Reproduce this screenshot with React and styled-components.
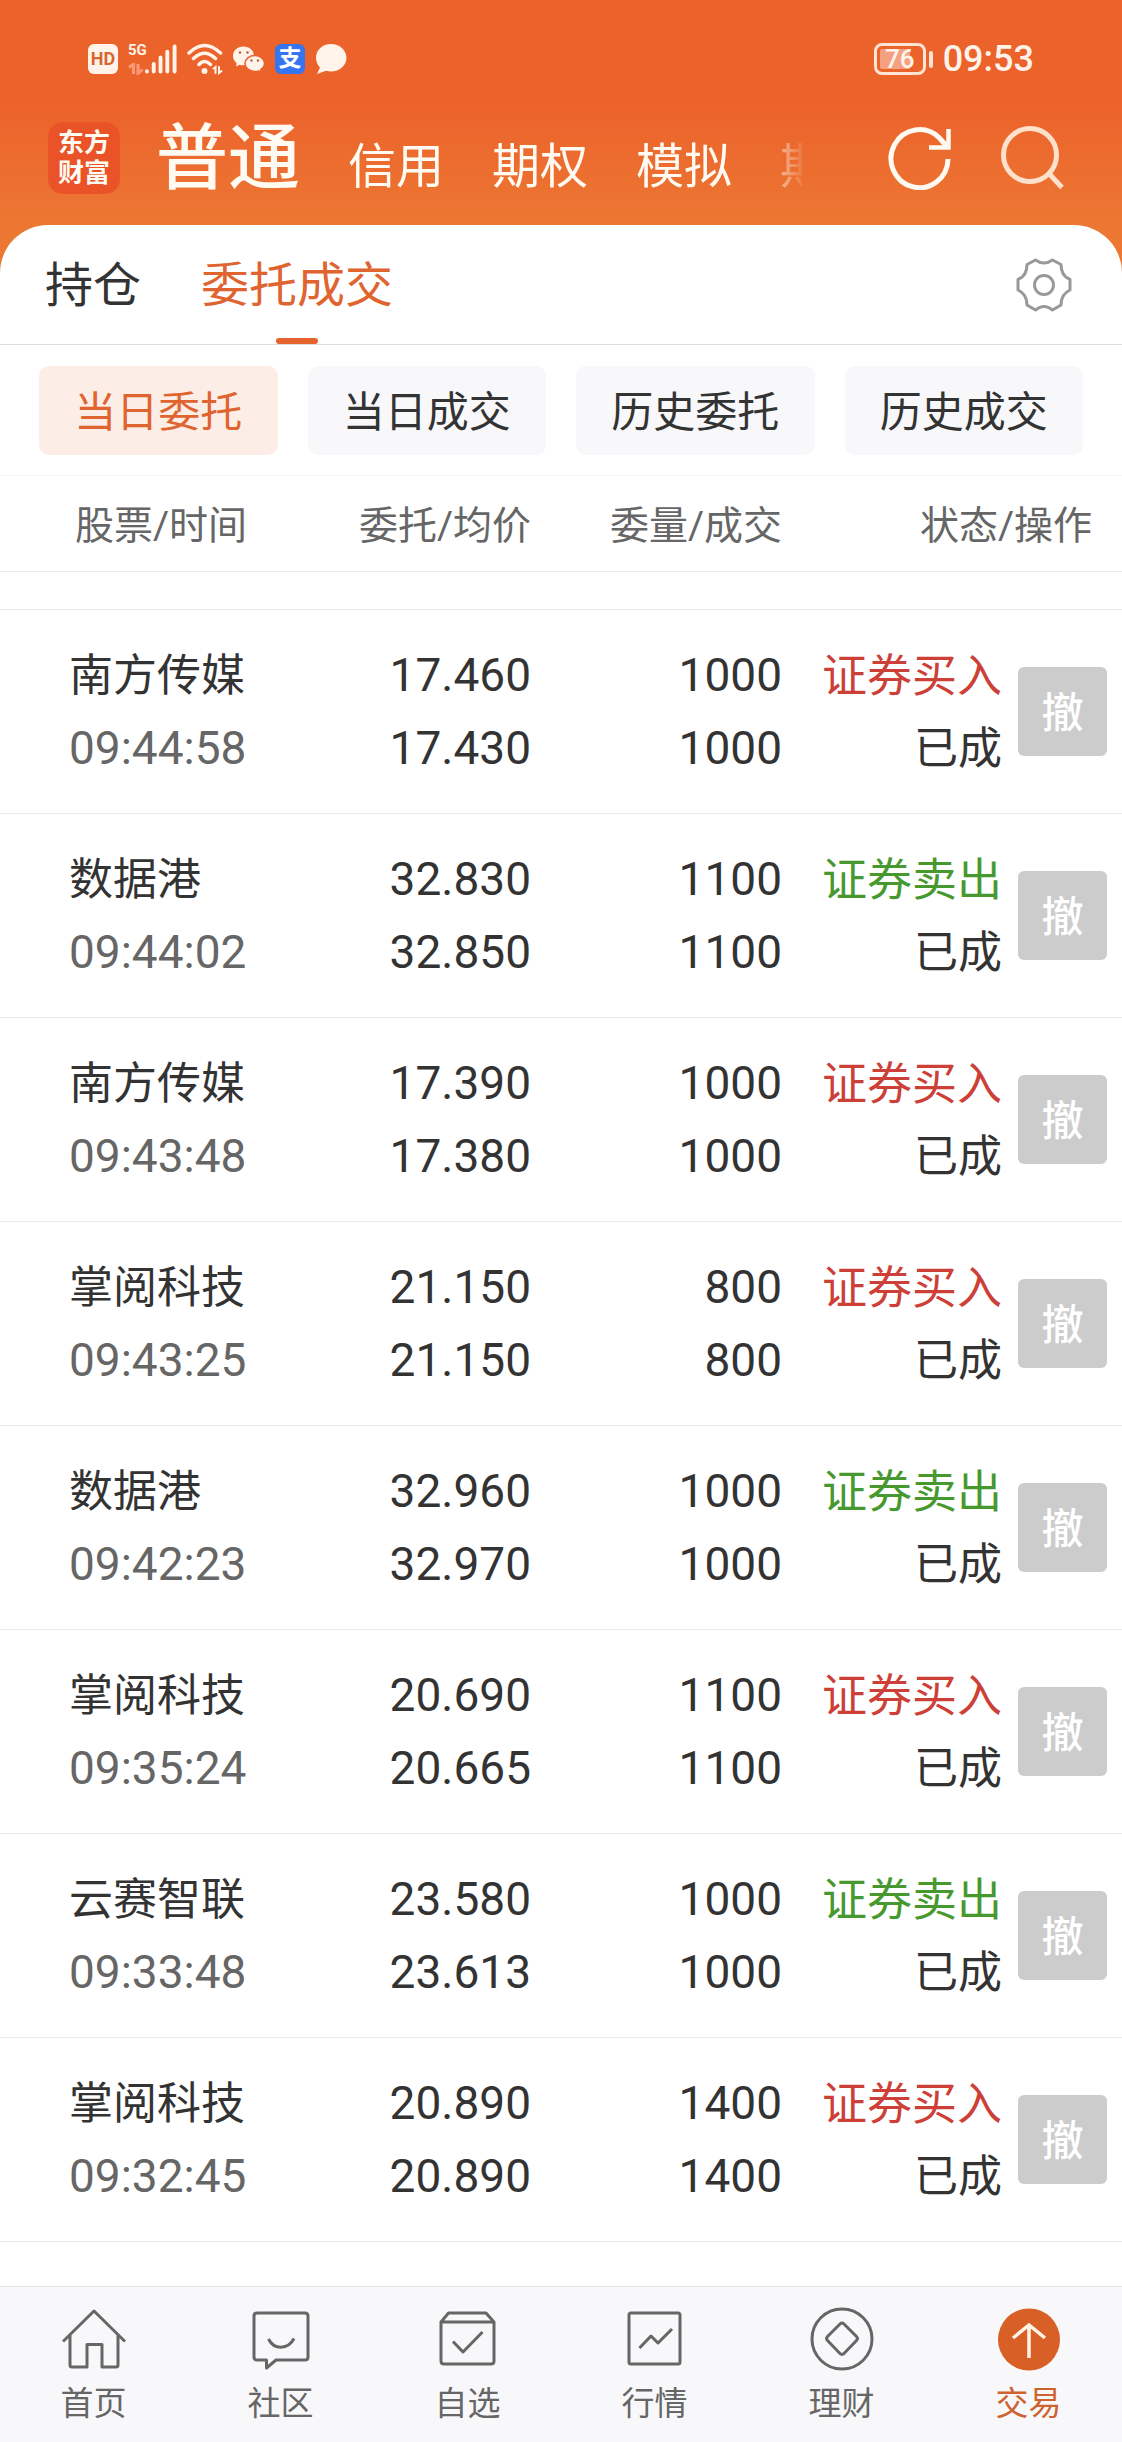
import React from 'react';
import styled, { createGlobalStyle } from 'styled-components';

const GlobalStyle = createGlobalStyle`
  * {
    box-sizing: border-box;
  }
  body {
    margin: 0;
    font-family: Roboto, "Noto Sans CJK SC", sans-serif;
    color: #333;
    background: #fff;
  }
  button {
    border: 0;
    padding: 0;
    margin: 0;
    background: none;
    font-family: inherit;
    color: inherit;
    cursor: pointer;
  }
  a {
    color: inherit;
    text-decoration: none;
  }
  svg {
    display: block;
    flex: none;
  }
`;

const Page = styled.div`
  min-height: 100vh;
  display: flex;
  flex-direction: column;
  background: linear-gradient(#ec622b 100px, #ec7733 225px);
`;

/*** status bar ***/
const StatusBar = styled.div`
  height: 118px;
  padding: 0 88px;
  display: flex;
  align-items: center;
  justify-content: space-between;
  color: #fff3ea;
`;

const StatusGroup = styled.div`
  display: flex;
  align-items: center;
  gap: 10px;
`;

const Badge = styled.span`
  width: 30px;
  height: 30px;
  border-radius: 6px;
  display: flex;
  align-items: center;
  justify-content: center;
  font-size: ${props => props.$size};
  font-weight: 700;
  line-height: 30px;
  color: ${props => props.$color};
  background: ${props => props.$bg};
`;

const Signal = styled.span`
  display: flex;
`;

const Network = styled.span`
  display: flex;
  flex-direction: column;
  justify-content: space-between;
  width: 17px;
  height: 32px;
  font-size: 15px;
  font-weight: 700;
  line-height: 15px;
`;

const PowerGroup = styled.div`
  display: flex;
  align-items: center;
`;

const Battery = styled.span`
  width: 52px;
  height: 32px;
  padding: 3px;
  border: 3px solid #ffe3d3;
  border-radius: 8px;
  background: linear-gradient(to right, #f5a181 76%, transparent 76%) content-box;
  font-size: 26px;
  font-weight: 500;
  line-height: 21px;
  text-align: center;
`;

const BatteryTip = styled.span`
  width: 4px;
  height: 17px;
  margin: 0 10px 0 3px;
  border-radius: 2px;
  background: #ffe3d3;
`;

const Clock = styled.span`
  font-size: 36px;
  font-weight: 500;
`;

/*** header ***/
const Header = styled.header`
  display: flex;
  align-items: center;
  padding: 0 58px 27px 48px;
  color: #fffaf2;
`;

const Logo = styled.div`
  width: 72px;
  height: 72px;
  flex: none;
  display: flex;
  align-items: center;
  justify-content: center;
  border-radius: 15px;
  background: #ea5228;
  font-size: 26px;
  font-weight: 700;
  line-height: 30px;
  text-align: center;
`;

const AccountTabs = styled.nav`
  flex: 1;
  min-width: 0;
  height: 80px;
  margin: 0 86px 0 36px;
  padding-top: 5px;
  display: flex;
  align-items: baseline;
  gap: 48px;
  overflow: hidden;
  mask-image: linear-gradient(to right, #000 calc(100% - 48px), rgba(0, 0, 0, 0.1));
`;

const AccountTab = styled.button`
  flex: none;
  font-size: ${props => (props.$active ? '72px' : '48px')};
  font-weight: ${props => (props.$active ? 500 : 400)};
  line-height: 72px;
`;

const HeaderActions = styled.div`
  display: flex;
  gap: 48px;
`;

/*** panel ***/
const Panel = styled.main`
  flex: 1;
  background: #fff;
  border-radius: 48px 48px 0 0;
`;

const TabBar = styled.div`
  height: 120px;
  padding: 0 50px 0 45px;
  display: flex;
  align-items: center;
  justify-content: space-between;
  border-bottom: 1px solid #ddd;
`;

const Tabs = styled.div`
  display: flex;
  gap: 60px;
  height: 119px;
`;

const Tab = styled.button`
  display: flex;
  flex-direction: column;
  align-items: center;
  justify-content: space-between;
  padding-top: 9px;
  font-size: 48px;
  line-height: 104px;
  color: ${props => (props.$active ? '#e0642f' : '#333')};
  &::after {
    content: '';
    width: 42px;
    height: 6px;
    border-radius: 3px;
    background: ${props => (props.$active ? '#e5642e' : 'transparent')};
  }
`;

const Filters = styled.div`
  display: flex;
  gap: 30px;
  padding: 21px 39px 20px;
  border-bottom: 1px solid #f5f5f5;
`;

const Filter = styled.button`
  flex: 1;
  height: 89px;
  padding-bottom: 4px;
  border-radius: 10px;
  font-size: 42px;
  color: ${props => (props.$active ? '#e0642f' : '#333')};
  background: ${props => (props.$active ? '#fcede6' : '#f8f8fa')};
`;

/*** orders ***/
const Orders = styled.table`
  width: 100%;
  table-layout: fixed;
  border-collapse: separate;
  border-spacing: 0;
`;

const Col = styled.col`
  width: ${props => props.$width};
`;

const HeadCell = styled.th`
  height: 96px;
  padding: ${props => props.$padding || '0 0 4px'};
  border-bottom: 1px solid #ebebeb;
  font-size: 39px;
  font-weight: 400;
  color: #666;
  text-align: ${props => props.$align || 'right'};
`;

const GapCell = styled.td`
  height: 38px;
  padding: 0;
  border-bottom: 1px solid #ebebeb;
`;

const Cell = styled.td`
  height: 204px;
  padding: ${props => props.$padding || '0'};
  border-bottom: 1px solid #ebebeb;
  text-align: ${props => props.$align || 'right'};
`;

const Line = styled.div`
  height: 73px;
  font-size: 46px;
  line-height: 73px;
  color: ${props => props.$color || '#333'};
`;

const TextLine = styled(Line)`
  font-size: ${props => props.$size || '44px'};
  line-height: 75px;
`;

const CancelButton = styled.button`
  display: block;
  width: 89px;
  height: 89px;
  margin-left: auto;
  padding-bottom: 4px;
  border-radius: 6px;
  background: #ccc;
  color: #fff;
  font-size: 42px;
  font-weight: 500;
`;

/*** bottom bar ***/
const BottomBar = styled.nav`
  display: flex;
  padding: 20px 0 14px;
  border-top: 1px solid #e2e2e2;
  background: #f8f8fa;
`;

const BottomLink = styled.a`
  flex: 1;
  display: flex;
  flex-direction: column;
  align-items: center;
  gap: 8px;
  font-size: 33px;
  line-height: 49px;
  color: ${props => (props.$active ? '#cf6330' : '#666')};
`;

const NavSvg = ({ children }) => (
  <svg width="64" height="64" viewBox="0 0 64 64" fill="none" stroke="#666" strokeWidth="3" strokeLinejoin="round">
    {children}
  </svg>
);

const navItems = [
  {
    label: '首页',
    icon: (
      <NavSvg>
        <path d="M1 34.500 32 4l31 30.500M8 28v30q0 2 2 2h15V37.500h15V60h14q2 0 2-2V28" />
      </NavSvg>
    ),
  },
  {
    label: '社区',
    icon: (
      <NavSvg>
        <path d="M8 6h48q3 0 3 3v41q0 3-3 3H27l-9.500 8V53H8q-3 0-3-3V9q0-3 3-3z" />
        <path d="M19.500 32C25 43 39 43 45 31.500" />
      </NavSvg>
    ),
  },
  {
    label: '自选',
    icon: (
      <NavSvg>
        <path d="M5 15 12.500 6H50l8 9v39q0 3-3 3H8q-3 0-3-3zh53" />
        <path d="m17 34.500 10 10.500 19.500-20" />
      </NavSvg>
    ),
  },
  {
    label: '行情',
    icon: (
      <NavSvg>
        <rect x="6" y="6" width="51" height="51" rx="2" />
        <path d="m16.500 41 11.500-12 7 7 14-14" />
      </NavSvg>
    ),
  },
  {
    label: '理财',
    icon: (
      <NavSvg>
        <circle cx="32" cy="32" r="30" />
        <path d="m34 17 12.500 12.500q2 2 0 4L34 46.500q-2 2-4 0L17.500 33.500q-2-2 0-4L30 17q2-2 4 0z" />
      </NavSvg>
    ),
  },
  {
    label: '交易',
    active: true,
    icon: (
      <svg width="64" height="64" viewBox="0 0 64 64" fill="none">
        <circle cx="32" cy="32.500" r="31" fill="#d86027" />
        <path d="M32 51V18M16 31 32 18l16 13" stroke="#fff3e6" strokeWidth="3.500" />
      </svg>
    ),
  },
];

const orders = [
  { name: '南方传媒', time: '09:44:58', price: '17.460', avg: '17.430', amount: '1000', filled: '1000', side: 'buy' },
  { name: '数据港', time: '09:44:02', price: '32.830', avg: '32.850', amount: '1100', filled: '1100', side: 'sell' },
  { name: '南方传媒', time: '09:43:48', price: '17.390', avg: '17.380', amount: '1000', filled: '1000', side: 'buy' },
  { name: '掌阅科技', time: '09:43:25', price: '21.150', avg: '21.150', amount: '800', filled: '800', side: 'buy' },
  { name: '数据港', time: '09:42:23', price: '32.960', avg: '32.970', amount: '1000', filled: '1000', side: 'sell' },
  { name: '掌阅科技', time: '09:35:24', price: '20.690', avg: '20.665', amount: '1100', filled: '1100', side: 'buy' },
  { name: '云赛智联', time: '09:33:48', price: '23.580', avg: '23.613', amount: '1000', filled: '1000', side: 'sell' },
  { name: '掌阅科技', time: '09:32:45', price: '20.890', avg: '20.890', amount: '1400', filled: '1400', side: 'buy' },
];

const sides = {
  buy: { text: '证券买入', color: '#cc4038' },
  sell: { text: '证券卖出', color: '#47992f' },
};

const StatusIcons = () => (
  <StatusGroup>
    <Badge $size="18px" $color="#d9652f" $bg="#fff3ea">HD</Badge>
    <Signal>
      <Network>
        5G
        <svg width="16" height="12" viewBox="0 0 16 12" fill="none" stroke="#f79a75" strokeWidth="3">
          <path d="M1 4.500 5.500 1v10M10 1v9.500l4.500-4" />
        </svg>
      </Network>
      <svg width="32" height="32" viewBox="0 0 33 32" fill="none" stroke="#fff3ea" strokeWidth="4" strokeLinecap="round">
        <path d="M2 28.500v.5M9 21v8M16 14.500V29M23 8.500V29M30.500 3v26" />
      </svg>
    </Signal>
    <svg width="36" height="32" viewBox="0 0 36 32" fill="none" stroke="#fff3ea" strokeWidth="3.500" strokeLinecap="round">
      <path d="M2 10Q17.500-5 33.500 10M6.500 15.500Q17.500 5 28.500 15.500M12 21.500q5.500-6 11.500 0" />
      <circle cx="17.500" cy="28" r="3" fill="#fff3ea" stroke="none" />
      <path d="m26.500 25.500 2-1.500v6M32 24v6l2.500-2" strokeWidth="2" />
    </svg>
    <svg width="32" height="30" viewBox="0 0 32 30">
      <g fill="#fff3ea">
        <path d="M10.500 2.500C4.500 2.500 0 6.600 0 12c0 3 1.500 5.500 3.700 7.200L3 22.500l3.700-1.800c5 1.800 14.300-1 14.300-8.700 0-5.400-4.500-9.500-10.500-9.500z" />
        <path d="M21.800 11.500c-5.500 0-9.800 3.500-9.800 8s4.300 8 9.800 8c1.300 0 2.500-.2 3.600-.6l3 1.600-.7-2.900c2.300-1.500 3.800-3.700 3.800-6.100 0-4.500-4.200-8-9.700-8z" stroke="#ec622b" strokeWidth="1.500" />
      </g>
      <g fill="#b9653f">
        <circle cx="7" cy="8.500" r="1.300" />
        <circle cx="14.500" cy="8.500" r="1.300" />
        <circle cx="18.500" cy="16.500" r="1.200" />
        <circle cx="25" cy="16.500" r="1.200" />
      </g>
    </svg>
    <Badge $size="23px" $color="#fff" $bg="#3575f2">支</Badge>
    <svg width="32" height="30" viewBox="0 0 32 30">
      <path d="M16 0C7.500 0 1 6 1 13.800c0 4 1.600 7.300 4 9.700L2 30l9-3.200c1.600.5 3.300.7 5 .7 8.500 0 15.500-6 15.500-13.700S24.500 0 16 0z" fill="#fff3ea" />
    </svg>
  </StatusGroup>
);

const App = () => {
  return (
    <>
      <GlobalStyle />
      <Page>
        <StatusBar>
          <StatusIcons />
          <PowerGroup>
            <Battery>76</Battery>
            <BatteryTip />
            <Clock>09:53</Clock>
          </PowerGroup>
        </StatusBar>

        <Header>
          <Logo>东方<br />财富</Logo>
          <AccountTabs>
            <AccountTab $active>普通</AccountTab>
            <AccountTab>信用</AccountTab>
            <AccountTab>期权</AccountTab>
            <AccountTab>模拟</AccountTab>
            <AccountTab>期货</AccountTab>
          </AccountTabs>
          <HeaderActions>
            <button aria-label="刷新">
              <svg width="64" height="64" viewBox="0 0 64 64" fill="none" stroke="#fffaf2" strokeWidth="5">
                <path d="M60 33A28.500 29 0 1 1 51 11.500l8 9" />
                <path d="M60.500 3v18.500H41" strokeWidth="4.500" />
              </svg>
            </button>
            <button aria-label="搜索">
              <svg width="64" height="64" viewBox="0 0 64 64" fill="none" stroke="#ffe0cb" strokeWidth="5">
                <circle cx="30" cy="29" r="26.500" />
                <path d="m49 47.500 13 14" />
              </svg>
            </button>
          </HeaderActions>
        </Header>

        <Panel>
          <TabBar>
            <Tabs>
              <Tab>持仓</Tab>
              <Tab $active>委托成交</Tab>
            </Tabs>
            <button aria-label="设置">
              <svg width="56" height="56" viewBox="0 0 56 56" fill="none" stroke="#999" strokeWidth="3" strokeLinejoin="round">
                <path d="M19.500 3Q28 9 36.500 3L45 7.500Q45 19 54 22.500v10.500Q45 37 45 48l-8.500 5Q28 46 19.500 53L11 48Q11 37 2 33V22.500Q11 19 11 7.500z" />
                <circle cx="28" cy="28" r="9.500" />
              </svg>
            </button>
          </TabBar>

          <Filters>
            <Filter $active>当日委托</Filter>
            <Filter>当日成交</Filter>
            <Filter>历史委托</Filter>
            <Filter>历史成交</Filter>
          </Filters>

          <Orders>
            <colgroup>
              <Col />
              <Col $width="220px" />
              <Col $width="251px" />
              <Col $width="220px" />
              <Col $width="120px" />
            </colgroup>
            <thead>
              <tr>
                <HeadCell $align="left" $padding="0 0 4px 75px">股票/时间</HeadCell>
                <HeadCell>委托/均价</HeadCell>
                <HeadCell>委量/成交</HeadCell>
                <HeadCell colSpan={2} $padding="0 30px 4px 0">状态/操作</HeadCell>
              </tr>
            </thead>
            <tbody>
              <tr>
                <GapCell colSpan={5} />
              </tr>
              {orders.map(order => (
                <tr key={order.time}>
                  <Cell $align="left" $padding="0 0 0 69px">
                    <TextLine>{order.name}</TextLine>
                    <Line $color="#666">{order.time}</Line>
                  </Cell>
                  <Cell>
                    <Line>{order.price}</Line>
                    <Line>{order.avg}</Line>
                  </Cell>
                  <Cell>
                    <Line>{order.amount}</Line>
                    <Line>{order.filled}</Line>
                  </Cell>
                  <Cell>
                    <TextLine $size="45px" $color={sides[order.side].color}>{sides[order.side].text}</TextLine>
                    <TextLine>已成</TextLine>
                  </Cell>
                  <Cell $padding="0 15px 0 0">
                    <CancelButton>撤</CancelButton>
                  </Cell>
                </tr>
              ))}
            </tbody>
          </Orders>
        </Panel>

        <BottomBar>
          {navItems.map(item => (
            <BottomLink key={item.label} href="#" $active={item.active}>
              {item.icon}
              {item.label}
            </BottomLink>
          ))}
        </BottomBar>
      </Page>
    </>
  );
};

export default App;
